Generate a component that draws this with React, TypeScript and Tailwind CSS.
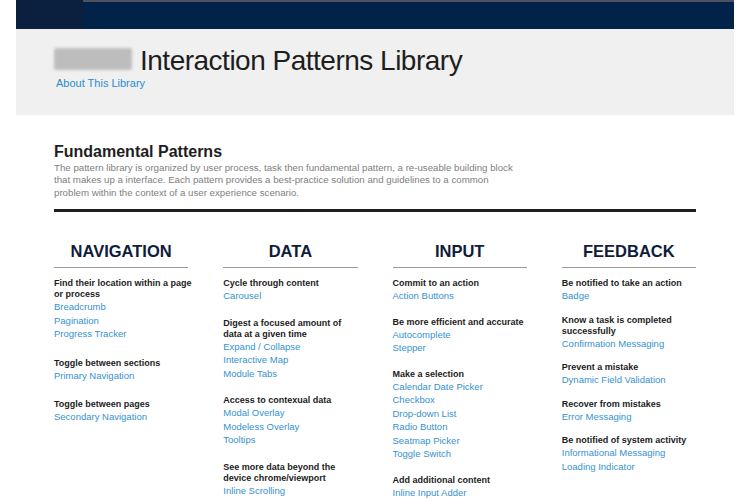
type Group = { task: string[]; links: string[] };
type Column = { title: string; gap: string; groups: Group[] };

const columns: Column[] = [
  {
    title: 'NAVIGATION',
    gap: 'gap-[17px]',
    groups: [
      { task: ['Find their location within a page', 'or process'], links: ['Breadcrumb', 'Pagination', 'Progress Tracker'] },
      { task: ['Toggle between sections'], links: ['Primary Navigation'] },
      { task: ['Toggle between pages'], links: ['Secondary Navigation'] },
    ],
  },
  {
    title: 'DATA',
    gap: 'gap-[15px]',
    groups: [
      { task: ['Cycle through content'], links: ['Carousel'] },
      { task: ['Digest a focused amount of', 'data at a given time'], links: ['Expand / Collapse', 'Interactive Map', 'Module Tabs'] },
      { task: ['Access to contexual data'], links: ['Modal Overlay', 'Modeless Overlay', 'Tooltips'] },
      { task: ['See more data beyond the', 'device chrome/viewport'], links: ['Inline Scrolling'] },
    ],
  },
  {
    title: 'INPUT',
    gap: 'gap-[14px]',
    groups: [
      { task: ['Commit to an action'], links: ['Action Buttons'] },
      { task: ['Be more efficient and accurate'], links: ['Autocomplete', 'Stepper'] },
      {
        task: ['Make a selection'],
        links: ['Calendar Date Picker', 'Checkbox', 'Drop-down List', 'Radio Button', 'Seatmap Picker', 'Toggle Switch'],
      },
      { task: ['Add additional content'], links: ['Inline Input Adder'] },
    ],
  },
  {
    title: 'FEEDBACK',
    gap: 'gap-[12px]',
    groups: [
      { task: ['Be notified to take an action'], links: ['Badge'] },
      { task: ['Know a task is completed', 'successfully'], links: ['Confirmation Messaging'] },
      { task: ['Prevent a mistake'], links: ['Dynamic Field Validation'] },
      { task: ['Recover from mistakes'], links: ['Error Messaging'] },
      { task: ['Be notified of system activity'], links: ['Informational Messaging', 'Loading Indicator'] },
    ],
  },
];

function PatternColumn({ column }: { column: Column }) {
  return (
    <div className="flex flex-col">
      <h2 className="border-b border-[#9a9a9a] pb-[6px] text-center text-[16.5px] font-bold leading-[20px] text-[#0f1d3b]">
        {column.title}
      </h2>
      <div className={`mt-[10px] flex flex-col ${column.gap}`}>
        {column.groups.map((group) => (
          <div key={group.task[0]} className="flex flex-col">
            {group.task.map((line) => (
              <div key={line} className="whitespace-nowrap text-[9px] font-bold leading-[11px] text-[#1c1c1c]">
                {line}
              </div>
            ))}
            {group.links.map((link) => (
              <a key={link} href="#" className="whitespace-nowrap text-[9.5px] leading-[13.5px] text-[#3592cf]">
                {link}
              </a>
            ))}
          </div>
        ))}
      </div>
    </div>
  );
}

export default function App() {
  return (
    <div className="min-h-[500px] bg-white font-['Liberation_Sans',Arial,sans-serif]">
      <div className="ml-[16px] w-[718px]">
        {/* Top bar */}
        <div className="flex h-[29px]">
          <div className="w-[67px] bg-[#0b1f3e]" />
          <div className="flex-1 border-t-2 border-[#4d525c] bg-[#012249]" />
        </div>

        {/* Masthead */}
        <div className="bg-[#f0f0f0] px-[38px] pb-[26px] pt-[16px]">
          <div className="flex items-start gap-[8px]">
            <div className="mt-[3px] h-[22px] w-[78px] rounded-[2px] bg-[#bdbdbd] blur-[1.5px]" />
            <h1 className="text-[28px] leading-[32px] tracking-[-0.5px] text-[#1e1e1e]">Interaction Patterns Library</h1>
          </div>
          <a href="#" className="ml-[2px] block text-[11px] leading-[12px] text-[#2a8ccc]">
            About This Library
          </a>
        </div>

        {/* Content */}
        <div className="px-[38px]">
          <h2 className="mt-[27px] text-[16px] font-bold leading-[20px] text-[#1e1e1e]">Fundamental Patterns</h2>
          <p className="whitespace-nowrap text-[9.7px] leading-[12.3px] text-[#808080]">
            The pattern library is organized by user process, task then fundamental pattern, a re-useable building block
            <br />
            that makes up a interface. Each pattern provides a best-practice solution and guidelines to a common
            <br />
            problem within the context of a user experience scenario.
          </p>
          <div className="mt-[10.5px] h-[3px] bg-[#1e1e1e]" />

          <div className="mt-[29px] grid grid-cols-4 gap-x-[35px]">
            {columns.map((column) => (
              <PatternColumn key={column.title} column={column} />
            ))}
          </div>
        </div>
      </div>
    </div>
  );
}
